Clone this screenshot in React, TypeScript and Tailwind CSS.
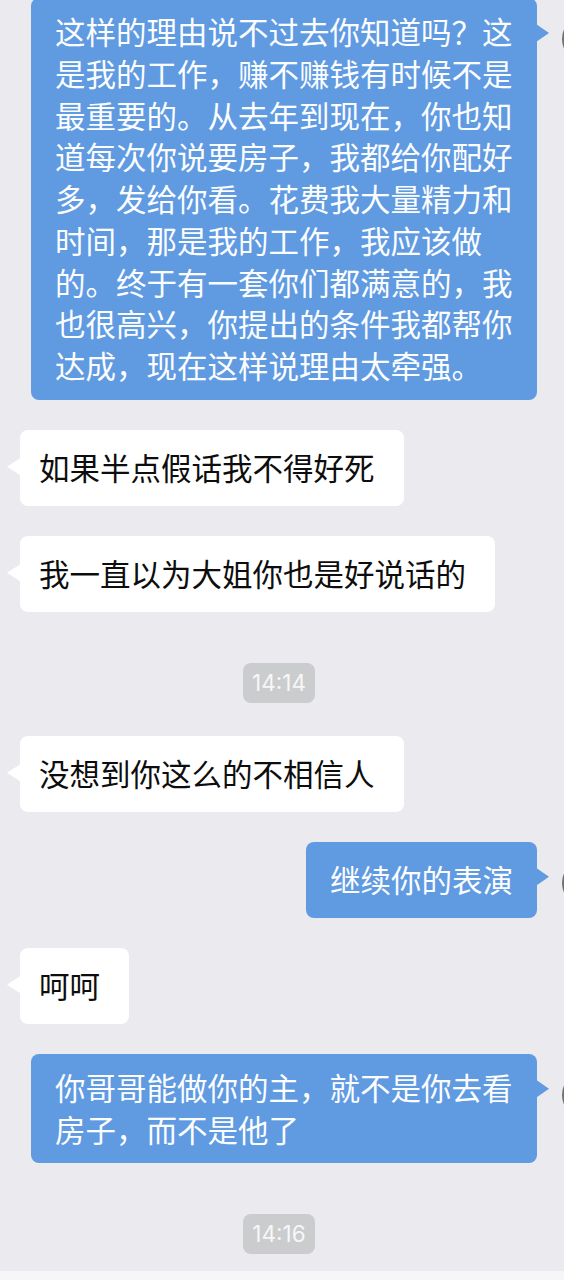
import React from "react";

type Msg =
  | { kind: "sent"; text: string }
  | { kind: "recv"; text: string }
  | { kind: "time"; text: string };

const messages: Msg[] = [
  {
    kind: "sent",
    text: "这样的理由说不过去你知道吗？这是我的工作，赚不赚钱有时候不是最重要的。从去年到现在，你也知道每次你说要房子，我都给你配好多，发给你看。花费我大量精力和时间，那是我的工作，我应该做的。终于有一套你们都满意的，我也很高兴，你提出的条件我都帮你达成，现在这样说理由太牵强。",
  },
  { kind: "recv", text: "如果半点假话我不得好死" },
  { kind: "recv", text: "我一直以为大姐你也是好说话的" },
  { kind: "time", text: "14:14" },
  { kind: "recv", text: "没想到你这么的不相信人" },
  { kind: "sent", text: "继续你的表演" },
  { kind: "recv", text: "呵呵" },
  { kind: "sent", text: "你哥哥能做你的主，就不是你去看房子，而不是他了" },
  { kind: "time", text: "14:16" },
];

function SentBubble({ text, className }: { text: string; className: string }) {
  return (
    <div className={`flex justify-end pr-[27px] ${className}`}>
      <div className="relative flex min-h-[76px] max-w-[506px] items-center rounded-[8px] bg-[#609ae1] px-[24px] py-[13px]">
        <p className="text-[30.5px] leading-[41.75px] text-[#fbfdff]">{text}</p>
        {/* tail */}
        <span className="absolute top-[26px] right-[-12px] h-[18px] w-[13px] bg-[#609ae1] [clip-path:polygon(0_0,100%_50%,0_100%)]" />
        {/* avatar, mostly off screen */}
        <span className="absolute top-[17px] left-[calc(100%+25px)] h-[48px] w-[48px] rounded-full bg-[#707072]" />
      </div>
    </div>
  );
}

function RecvBubble({ text, className }: { text: string; className: string }) {
  return (
    <div className={`flex justify-start pl-[20px] ${className}`}>
      <div className="relative flex min-h-[76px] items-center rounded-[8px] bg-white pl-[19px] pr-[29px] py-[13px]">
        <p className="text-[30.5px] leading-[41.75px] text-[#0d0d0d]">{text}</p>
        <span className="absolute top-[28px] left-[-13px] h-[18px] w-[14px] bg-white [clip-path:polygon(100%_0,0_50%,100%_100%)]" />
      </div>
    </div>
  );
}

function TimeStamp({ text, className }: { text: string; className: string }) {
  return (
    <div className={`flex justify-center pr-[6px] ${className}`}>
      <span className="flex h-[40px] items-center rounded-[8px] bg-[#cbccce] px-[9px] font-['Inter',sans-serif] text-[22.5px] text-[#f7f7f8]">
        {text}
      </span>
    </div>
  );
}

export default function App() {
  return (
    <div className="relative flex h-[1280px] w-[564px] flex-col overflow-hidden bg-[#ebebef] font-['Noto_Sans_CJK_SC','Noto_Sans_CJK_JP',sans-serif]">
      <div className="flex flex-1 flex-col">
        {messages.map((m, i) => {
          const prev = i > 0 ? messages[i - 1] : null;
          let spacing = "mt-[30px]";
          if (i === 0) spacing = "-mt-[2px]";
          else if (m.kind === "time") spacing = "mt-[51px]";
          else if (prev && prev.kind === "time") spacing = "mt-[33px]";

          if (m.kind === "sent") return <SentBubble key={i} text={m.text} className={spacing} />;
          if (m.kind === "recv") return <RecvBubble key={i} text={m.text} className={spacing} />;
          return <TimeStamp key={i} text={m.text} className={spacing} />;
        })}
      </div>
      {/* input bar edge */}
      <div className="h-[9px] bg-[#f6f6f8]" />
    </div>
  );
}
